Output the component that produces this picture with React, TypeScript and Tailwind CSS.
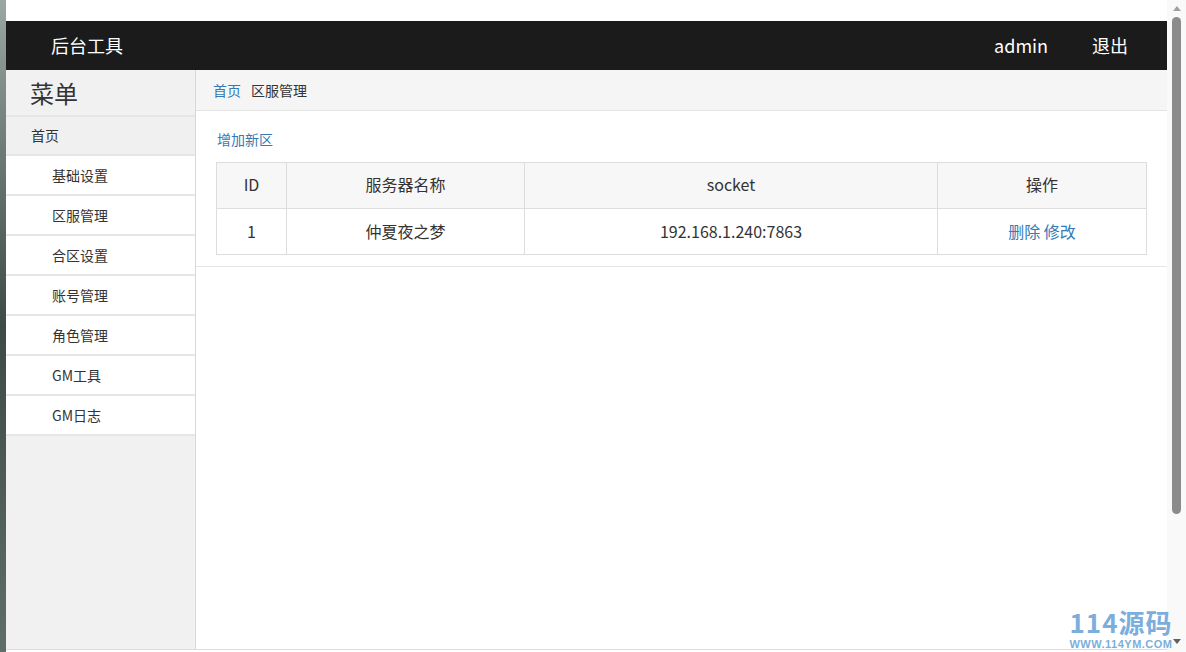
import React from 'react';

const menuItems = ['基础设置', '区服管理', '合区设置', '账号管理', '角色管理', 'GM工具', 'GM日志'];

const rows = [{ id: 1, name: '仲夏夜之梦', socket: '192.168.1.240:7863' }];

export default function App() {
    return (
        <div
            className="relative flex h-[652px] w-[1186px] overflow-hidden bg-white text-[#333]"
            style={{ fontFamily: '"Noto Sans CJK SC", "Noto Sans", sans-serif' }}
        >
            {/* desktop edge behind the window */}
            <div className="w-[6px] shrink-0 bg-gradient-to-b from-[#9aa7a4] via-[#3d4a48] to-[#5e6f6a]" />

            <div className="flex w-[1161px] shrink-0 flex-col">
                <div className="h-[21px] shrink-0 bg-white" />

                {/* top bar */}
                <div className="flex h-[49px] shrink-0 items-center bg-[#1b1b1b] text-white">
                    <div className="pl-[45px] text-[18px]">后台工具</div>
                    <div className="ml-auto flex items-center gap-[44px] pr-[39px] text-[18px]">
                        <span>admin</span>
                        <span>退出</span>
                    </div>
                </div>

                <div className="flex min-h-0 flex-1 border-b border-[#dcdcdc]">
                    {/* sidebar */}
                    <div className="flex w-[190px] shrink-0 flex-col border-r border-[#d8d8d8] bg-[#f1f1f1]">
                        <div className="flex h-[47px] items-center border-b-2 border-[#e6e6e6] pl-[24px] text-[24px] text-[#333]">
                            菜单
                        </div>
                        <div className="flex h-[39px] items-center border-b-2 border-[#e6e6e6] bg-[#f0f0f0] pl-[25px] text-[14px]">
                            首页
                        </div>
                        {menuItems.map((m) => (
                            <div
                                key={m}
                                className="flex h-[40px] items-center border-b-2 border-[#e6e6e6] bg-white pl-[46px] text-[14px] text-[#333]"
                            >
                                {m}
                            </div>
                        ))}
                    </div>

                    {/* main */}
                    <div className="flex min-w-0 flex-1 flex-col">
                        <div className="flex h-[41px] shrink-0 items-center gap-[10px] border-b border-[#e3e3e3] bg-[#f5f5f5] pl-[17px] text-[14px]">
                            <span className="text-[#337ab7]">首页</span>
                            <span className="text-[#333]">区服管理</span>
                        </div>

                        <div className="border-b border-[#e5e5e5] bg-white px-[20px] pb-[11px] pt-[18px]">
                            <div className="pl-[1px] text-[14px] leading-[20px] text-[#337ab7]">增加新区</div>
                            <table className="mt-[13px] w-full border-collapse text-center text-[16px] leading-[20px] text-[#333]">
                                <thead>
                                    <tr className="h-[46px] bg-[#f7f7f7]">
                                        <th className="w-[70px] border border-[#dddddd] pb-[3px] font-normal">ID</th>
                                        <th className="w-[238px] border border-[#dddddd] pb-[3px] font-normal">服务器名称</th>
                                        <th className="w-[413px] border border-[#dddddd] pb-[3px] font-normal">socket</th>
                                        <th className="border border-[#dddddd] pb-[3px] font-normal">操作</th>
                                    </tr>
                                </thead>
                                <tbody>
                                    {rows.map((r) => (
                                        <tr key={r.id} className="h-[46px]">
                                            <td className="border border-[#dddddd] pb-[1px]">{r.id}</td>
                                            <td className="border border-[#dddddd] pb-[1px]">{r.name}</td>
                                            <td className="border border-[#dddddd] pb-[1px]">{r.socket}</td>
                                            <td className="border border-[#dddddd] pb-[1px] text-[#337ab7]">删除 修改</td>
                                        </tr>
                                    ))}
                                </tbody>
                            </table>
                        </div>
                    </div>
                </div>
                <div className="h-[2px] shrink-0 bg-white" />
            </div>

            {/* window scrollbar */}
            <div className="relative flex w-[19px] shrink-0 flex-col items-center bg-[#f9f9f9]">
                <div className="mt-[6px] h-0 w-0 border-x-[4px] border-b-[5px] border-x-transparent border-b-[#a0a0a0]" />
                <div className="mt-[6px] h-[497px] w-[9px] rounded-full bg-[#8b8b8b]" />
                <div className="mt-auto mb-[8px] h-0 w-0 border-x-[4px] border-t-[5px] border-x-transparent border-t-[#606060]" />
            </div>

            {/* watermark */}
            <div className="pointer-events-none absolute right-[11px] bottom-[2px] flex w-[108px] flex-col items-center text-[#5b9bd5] opacity-80">
                <span className="text-[26px] font-bold leading-[33px] tracking-[1px]">114源码</span>
                <span
                    className="text-[11px] font-bold leading-[12px] tracking-[0.5px]"
                    style={{ fontFamily: '"Liberation Sans", Arial, sans-serif' }}
                >
                    WWW.114YM.COM
                </span>
            </div>
        </div>
    );
}
